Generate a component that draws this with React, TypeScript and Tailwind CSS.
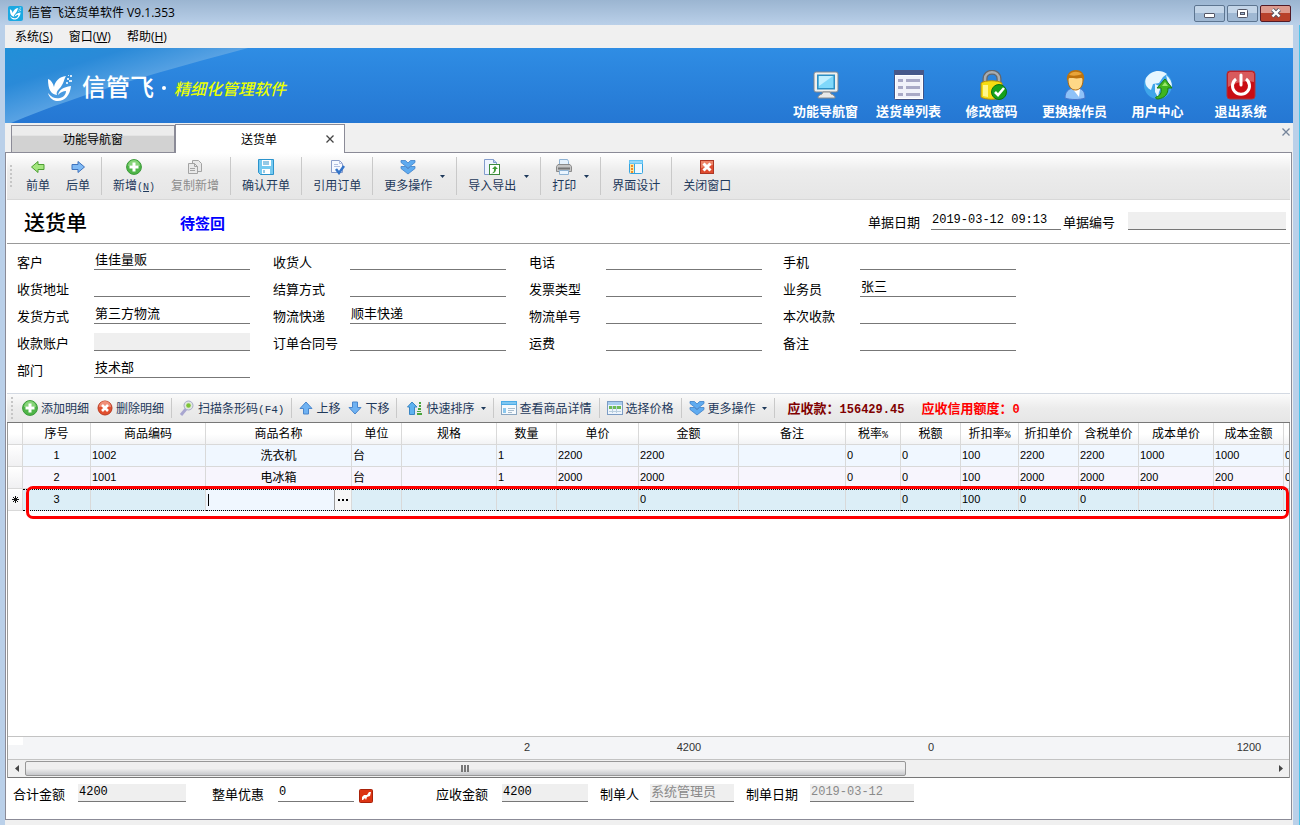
import React, { useId } from "react"
import clsx from "clsx"

const mono = "font-['Liberation_Mono','Noto_Sans_CJK_SC',monospace]"
const num = "font-['Liberation_Sans','Noto_Sans_CJK_SC',sans-serif] text-[11px]"
const menuFont = "font-['Open_Sans','Noto_Sans_CJK_SC',sans-serif]"

/* ---------- icons ---------- */

function Bird({ className }: { className?: string }) {
    return (
        <svg viewBox="0 0 26 28" className={className} fill="#fff">
            <path d="M1 5C4 6 6 9 7 13C8 7 12 3 19 2C17 5 17 10 12 15C10 17 9 19 10 21C4 20 1 16 1 5z" />
            <path d="M24 12C23 22 17 28 9 27C5 26 2 23 1 19C5 24 9 25 13 24C17 23 19 20 19 17C16 17 14 18 11 21C12 16 16 13 24 12z" />
            <path d="M20 4h2v2h-2zM23 1h2v2h-2zM22 6h3v2h-3zM19 8h2v2h-2zM21 1h1v1h-1z" opacity=".8" />
        </svg>
    )
}

const MonitorIcon = () => (
    <svg viewBox="0 0 30 30" className="size-[30px]">
        <rect x="3" y="2" width="24" height="20" rx="2" fill="#f0f0ee" stroke="#7f8790" />
        <rect x="6" y="4.500" width="18" height="15" fill="#2d8fc4" />
        <rect x="7.500" y="6" width="15" height="12" fill="#7fd8fb" />
        <path d="M8 6h14L8 16z" fill="#c1efff" />
        <path d="M12 22h7l1 2c3 1 4 2 4 4H7c0-2 1-3 4-4z" fill="#e9e9e9" stroke="#8a8a8a" />
    </svg>
)

const ListIcon = () => (
    <svg viewBox="0 0 30 30" className="size-[30px]">
        <rect x="0.5" y="0.5" width="29" height="29" rx="1" fill="#fff" stroke="#3f5185" />
        <path d="M0 0h30v5H0z" fill="#46588a" />
        <path d="M2 6h26v22H2z" fill="#f1f2fa" />
        <path d="M4 9h5v3H4zM12 9h14v3H12zM4 16h5v3H4zM12 16h14v3H12zM4 23h5v3H4zM12 23h14v3H12z" fill="#a9a9c6" />
    </svg>
)

const LockIcon = () => (
    <svg viewBox="0 0 30 30" className="size-[30px]">
        <path d="M8 14V9c0-9 14-9 14 0v5" fill="none" stroke="#63676c" strokeWidth="5" />
        <path d="M8 14V9c0-9 14-9 14 0v5" fill="none" stroke="#a9adb1" strokeWidth="2.500" />
        <path d="M4 13c4-3 17-3 21 0v14c-4 3-17 3-21 0z" fill="#f5dc12" stroke="#b78d09" />
        <path d="M6 15h5v12l-5-1z" fill="#fff78a" />
        <circle cx="22" cy="22" r="7.5" fill="#16a11c" stroke="#0a7210" />
        <path d="M18 22l3 3 6-7" fill="none" stroke="#fff" strokeWidth="2.6" />
    </svg>
)

const UserIcon = () => (
    <svg viewBox="0 0 30 30" className="size-[30px]">
        <path d="M5 28c0-6 3-9 8-10h5c5 1 7 4 7 10-5 2-15 2-20 0z" fill="#8fc2f8" stroke="#4776cc" />
        <path d="M12 18l7 9 1-8z" fill="#fff" />
        <path d="M8 10c0-6 3-8 7.500-8S23 4 23 10s-3 10-7.500 10S8 16 8 10z" fill="#ffd887" stroke="#b0690c" />
        <path d="M7 11C6 4 10 0 16 0s9 4 8 11c-1-2-1-3-3-3-5 1-8 0-11 0-2 0-2 2-3 3z" fill="#bd730e" />
        <path d="M9 5c3-4 9-4 13-1-5 2-9 2-13 1z" fill="#e8a53a" />
    </svg>
)

const GlobeIcon = () => (
    <svg viewBox="0 0 30 30" className="size-[30px]">
        <circle cx="15" cy="15" r="14" fill="#3fa5ea" />
        <path d="M3 8C8 0 18-1 24 4l-4 3-4 6-6 1-2 6C3 18 1 13 3 8z" fill="#e6f6ff" />
        <path d="M12 14l6 3-2 5-1 5-3-5zM23 5c4 3 6 7 6 12l-4-4z" fill="#e6f6ff" />
        <path d="M22 9l7 9h-4c0 6-3 10-10 11-2 0-3-1-2-2 4-1 6-4 5-9h-4z" fill="#3fb51f" stroke="#1f7d10" />
        <path d="M22 12l3 4h-6z" fill="#9be66b" />
    </svg>
)

const PowerIcon = () => (
    <svg viewBox="0 0 30 30" className="size-[30px]">
        <rect x="1" y="1" width="28" height="28" rx="3" fill="#c90d14" stroke="#a9393e" />
        <path d="M2 4c0-1 1-2 2-2h22c1 0 2 1 2 2v8C20 10 10 12 2 17z" fill="#d85a5c" />
        <path d="M10 9a8.5 8.5 0 1 0 10 0" fill="none" stroke="#fff" strokeWidth="3" />
        <path d="M15 5v10" stroke="#fff" strokeWidth="3" strokeLinecap="round" />
    </svg>
)

const LeftArrow = () => (
    <svg viewBox="0 0 16 16" className="size-4">
        <path d="M1.500 8L8 2.500V5.500h6v5H8v3z" fill="#a4e67e" stroke="#4d9f33" />
    </svg>
)

const RightArrow = () => (
    <svg viewBox="0 0 16 16" className="size-4">
        <path d="M14.500 8L8 2.500V5.500H2v5h6v3z" fill="#7fb9f4" stroke="#3f73bd" />
    </svg>
)

const AddIcon = () => (
    <svg viewBox="0 0 16 16" className="size-4">
        <circle cx="8" cy="8" r="7.400" fill="#4fb548" stroke="#3a9a38" />
        <path d="M2 7a6 6 0 0 1 12 0c-4-1-8-1-12 0z" fill="#86d478" />
        <path d="M6.500 3.500h3v3h3v3h-3v3h-3v-3h-3v-3h3z" fill="#fff" />
    </svg>
)

const DeleteIcon = () => (
    <svg viewBox="0 0 16 16" className="size-4">
        <circle cx="8" cy="8" r="7" fill="#e2502f" stroke="#b9391f" />
        <path d="M2 7a6 6 0 0 1 12 0c-4-1-8-1-12 0z" fill="#f0907a" />
        <path d="M5 5l6 6M11 5l-6 6" stroke="#fff" strokeWidth="2.600" />
    </svg>
)

const CopyIcon = () => (
    <svg viewBox="0 0 16 16" className="size-4" fill="#e9e9e9" stroke="#a3a3a3">
        <path d="M5.500 1.500h6l3 3v8h-9z" />
        <path d="M1.500 4.500h6l3 3v7h-9zM7.500 4.500v3h3" />
        <path d="M3 9.500h5M3 11.500h5" />
    </svg>
)

const SaveIcon = () => (
    <svg viewBox="0 0 16 16" className="size-4">
        <path d="M.5.5h15v15h-13l-2-2z" fill="#74c9f0" stroke="#2b93cc" />
        <path d="M4 1h9v6H4zM4 10h8v5H4z" fill="#fff" />
        <path d="M5 3h6M5 5h6M6 11v3" stroke="#2b93cc" />
    </svg>
)

const OrderIcon = () => (
    <svg viewBox="0 0 16 16" className="size-4">
        <path d="M2.500 1.500h8l3 3v9h-11z" fill="#f6f8ff" stroke="#8b9cc8" />
        <path d="M10.500 1.500v3h3M5 5.500h4M5 7.500h6" fill="none" stroke="#b3bfe0" />
        <path d="M7 10l3 4 5-7" fill="none" stroke="#3474c8" strokeWidth="2.500" />
    </svg>
)

const MoreIcon = () => (
    <svg viewBox="0 0 16 16" className="size-4" fill="#5fabf0" stroke="#3f80c8" strokeWidth=".8">
        <path d="M1 1.500h4.500L8 4l2.500-2.500H15v2L8 9 1 3.500z" />
        <path d="M1 7.500h4.500L8 10l2.500-2.500H15v2L8 15 1 9.500z" />
    </svg>
)

const ExportIcon = () => (
    <svg viewBox="0 0 16 16" className="size-4">
        <path d="M.5.500h9l3 3v12H.5z" fill="#eef4ff" stroke="#829ccc" />
        <path d="M9.500.500v3h3" fill="#b8d0f4" stroke="#829ccc" />
        <rect x="5.500" y="5.500" width="10" height="10" fill="#fff" stroke="#3d8a3d" />
        <path d="M7 14c3 0 3-2 3-4H8l3-3 3 3h-2c0 3-2 5-5 4z" fill="#3d9a33" />
    </svg>
)

const PrintIcon = () => (
    <svg viewBox="0 0 16 16" className="size-4">
        <path d="M3.500.500h8l1 2v4h-9z" fill="#e6f2fd" stroke="#8fb3d4" />
        <path d="M2 5.500h12l1.500 2v5H.5v-5z" fill="#c4c4c4" stroke="#8b8b8b" />
        <path d="M2 9.500h12" stroke="#757575" strokeWidth="2" />
        <path d="M3.500 11.500h9v4h-9z" fill="#eaf5ff" stroke="#8fb3d4" />
    </svg>
)

const DesignIcon = () => (
    <svg viewBox="0 0 16 16" className="size-4">
        <rect x="1.500" y="1.500" width="13" height="13" rx="1" fill="#eef9ff" stroke="#33a4e0" />
        <path d="M1 1h14v4H1z" fill="#63c4f4" />
        <path d="M2 3h12" stroke="#c8edff" />
        <path d="M2 5h4v9H2z" fill="#ffe7a0" />
        <path d="M3 6h2v2H3zM3 9h2v2H3zM3 12h2v2H3z" fill="#f08a2c" />
        <path d="M6.500 5v9" stroke="#33a4e0" />
    </svg>
)

const CloseRedIcon = () => (
    <svg viewBox="0 0 16 16" className="size-4">
        <rect x="1.500" y="1.500" width="13" height="13" fill="#df4c2f" stroke="#ad3624" />
        <path d="M2 2h12v4L2 9z" fill="#ee8468" />
        <path d="M4.500 4.500l7 7M11.500 4.500l-7 7" stroke="#fff" strokeWidth="3" />
    </svg>
)

const ScanIcon = () => (
    <svg viewBox="0 0 16 16" className="size-4">
        <path d="M7 9l-5 6" stroke="#a8a6d0" strokeWidth="3" />
        <circle cx="9.500" cy="5.500" r="4.500" fill="#e1e9dc" stroke="#a5a8cc" />
        <circle cx="9.500" cy="5.500" r="2.300" fill="#7cc438" />
    </svg>
)

const UpIcon = () => (
    <svg viewBox="0 0 14 16" className="h-4 w-[14px]">
        <path d="M7 2l6 6.500H9.500V14h-5V8.500H1z" fill="#6fb2f2" stroke="#4a86cc" />
    </svg>
)

const DownIcon = () => (
    <svg viewBox="0 0 14 16" className="h-4 w-[14px]">
        <path d="M7 14l6-6.500H9.500V2h-5v5.500H1z" fill="#6fb2f2" stroke="#4a86cc" />
    </svg>
)

const SortIcon = () => (
    <svg viewBox="0 0 16 16" className="size-4">
        <path d="M5 2l5 5H7.500v7.500h-5V7H.5z" fill="#5fb2f0" stroke="#3a86c4" />
        <path d="M12 2h2v2h-2zM12 5h2v2h-2zM11 8h3v2h-3zM10 11h4v1h-4zM10 13h5v2h-5z" fill="#4aa63c" />
    </svg>
)

const DetailIcon = () => (
    <svg viewBox="0 0 16 16" className="size-4">
        <rect x=".5" y="1.500" width="15" height="13" fill="#f6fafd" stroke="#8ba6c0" />
        <path d="M0 1h16v4H0z" fill="#4cabe6" />
        <path d="M1 3h14" stroke="#b2e2fb" />
        <path d="M2 8h3v5H2z" fill="#8cc8ee" />
        <path d="M7 8.500h7M7 10.500h6M7 12.500h4" stroke="#a8bccd" />
    </svg>
)

const PriceIcon = () => (
    <svg viewBox="0 0 16 16" className="size-4">
        <rect x=".5" y="1.500" width="15" height="13" fill="#eef5fc" stroke="#7c9cc4" />
        <path d="M1 2h14v3H1z" fill="#a9cdef" />
        <path d="M2 6h12v3H2z" fill="#6cbb57" />
        <path d="M2 11.500h12M5.500 6v7M9.500 6v7" stroke="#b9cede" />
    </svg>
)

const Caret = () => (
    <svg viewBox="0 0 5 3" className="h-[3px] w-[5px]">
        <path d="M0 0h5L2.500 3z" fill="#1e395b" />
    </svg>
)

const NewRowMark = () => (
    <svg viewBox="0 0 9 9" className="mx-auto size-[9px]">
        <path d="M4.500 1v7M1 4.500h7M2 2l5 5M7 2L2 7" stroke="#111" />
    </svg>
)

const Cross = ({ className }: { className?: string }) => (
    <svg viewBox="0 0 8 8" className={clsx("size-2", className)}>
        <path d="M.5.5l7 7M7.500.5l-7 7" stroke="currentColor" strokeWidth="1.300" />
    </svg>
)

/* ---------- small parts ---------- */

function Grip() {
    return (
        <div className="flex w-[3px] flex-col gap-[2px]">
            {[0, 1, 2, 3, 4, 5].map((i) => (
                <span key={i} className="h-[2px] w-[2px] bg-[#c6c6c6]" />
            ))}
        </div>
    )
}

type ToolProps = { icon: React.ReactNode; children: React.ReactNode; disabled?: boolean; more?: boolean }

function Tool({ icon, children, disabled, more }: ToolProps) {
    return (
        <button disabled={disabled} className={clsx("flex items-center gap-2 px-2", disabled ? "text-[#8d8d8d]" : "text-[#1e395b]")}>
            <span className="flex flex-col items-center gap-[2px]">
                {icon}
                <span className="h-4 whitespace-nowrap leading-4">{children}</span>
            </span>
            {more && <Caret />}
        </button>
    )
}

function ToolGroup({ children, last }: { children: React.ReactNode; last?: boolean }) {
    return <div className={clsx("flex h-[38px] items-center px-[3px]", !last && "border-r border-[#c9c9c9]")}>{children}</div>
}

function SmallTool({ icon, children, more }: ToolProps) {
    return (
        <button className="flex items-center gap-[3px] px-1 whitespace-nowrap text-[#1e395b]">
            {icon}
            <span className="h-4 leading-4">{children}</span>
            {more && <span className="pl-[3px]"><Caret /></span>}
        </button>
    )
}

function SmallGroup({ children }: { children: React.ReactNode }) {
    return <div className="flex h-[20px] items-center border-r border-[#c9c9c9] px-[3px]">{children}</div>
}

type FieldProps = { label: string; value?: string; labelWidth?: string; width?: string; gray?: boolean; muted?: boolean; code?: boolean }

function Field({ label, value = "", labelWidth = "w-[77px]", width = "w-[156px]", gray, muted, code }: FieldProps) {
    const id = useId()
    return (
        <div className="flex h-[18px]">
            <label htmlFor={id} className={clsx("shrink-0 pt-px leading-[18px] whitespace-nowrap", labelWidth)}>{label}</label>
            <input
                id={id}
                defaultValue={value}
                readOnly={gray}
                className={clsx(
                    "h-[18px] border-b border-[#777] pr-[2px] pl-px leading-4 outline-none",
                    width,
                    gray ? "bg-[#efefef]" : "bg-white",
                    muted && "text-[#8a8a8a]",
                    code && mono,
                    code ? "pb-[2px] text-[12px]" : "pb-[4px] text-[13px]"
                )}
            />
        </div>
    )
}

/* ---------- data ---------- */

const navItems = [
    { text: "功能导航窗", icon: <MonitorIcon /> },
    { text: "送货单列表", icon: <ListIcon /> },
    { text: "修改密码", icon: <LockIcon /> },
    { text: "更换操作员", icon: <UserIcon /> },
    { text: "用户中心", icon: <GlobeIcon /> },
    { text: "退出系统", icon: <PowerIcon /> },
]

const fields: FieldProps[] = [
    { label: "客户", value: "佳佳量贩" }, { label: "收货人" }, { label: "电话" }, { label: "手机" },
    { label: "收货地址" }, { label: "结算方式" }, { label: "发票类型" }, { label: "业务员", value: "张三" },
    { label: "发货方式", value: "第三方物流" }, { label: "物流快递", value: "顺丰快递" }, { label: "物流单号" }, { label: "本次收款" },
    { label: "收款账户", gray: true }, { label: "订单合同号" }, { label: "运费" }, { label: "备注" },
    { label: "部门", value: "技术部" },
]

const columns = [
    { name: "序号", col: "w-[68px]", sum: "" },
    { name: "商品编码", col: "w-[115px]", sum: "" },
    { name: "商品名称", col: "w-[146px]", sum: "" },
    { name: "单位", col: "w-[50px]", sum: "" },
    { name: "规格", col: "w-[95px]", sum: "" },
    { name: "数量", col: "w-[60px]", sum: "2" },
    { name: "单价", col: "w-[82px]", sum: "" },
    { name: "金额", col: "w-[100px]", sum: "4200" },
    { name: "备注", col: "w-[107px]", sum: "" },
    { name: "税率%", col: "w-[55px]", sum: "" },
    { name: "税额", col: "w-[60px]", sum: "0" },
    { name: "折扣率%", col: "w-[58px]", sum: "" },
    { name: "折扣单价", col: "w-[60px]", sum: "" },
    { name: "含税单价", col: "w-[60px]", sum: "" },
    { name: "成本单价", col: "w-[75px]", sum: "" },
    { name: "成本金额", col: "w-[70px]", sum: "1200" },
    { name: "", col: "w-[60px]", sum: "" },
]

const rows = [
    ["1", "1002", "洗衣机", "台", "", "1", "2200", "2200", "", "0", "0", "100", "2200", "2200", "1000", "1000", "0"],
    ["2", "1001", "电冰箱", "台", "", "1", "2000", "2000", "", "0", "0", "100", "2000", "2000", "200", "200", "0"],
    ["3", "", "", "", "", "", "", "0", "", "", "0", "100", "0", "0", "", "", ""],
]

const rowColors = ["bg-[#f0f7ff]", "bg-[#f7f5fd]", "bg-[#dceef7]"]

/* ---------- sections ---------- */

function TitleBar() {
    const button = "flex h-[17px] w-[31px] items-center justify-center rounded-[2px] border"
    return (
        <div className="flex h-[25px] items-center bg-linear-to-b from-[#9bb5d1] to-[#bad0e9] pt-px pr-[9px] pl-2">
            <span className="flex size-[15px] items-center justify-center rounded-[2px] bg-[#1ba9e2]">
                <Bird className="h-[13px] w-[13px]" />
            </span>
            <h1 className={clsx("ml-[5px] pb-px text-[12px]", menuFont)}>信管飞送货单软件 V9.1.353</h1>
            <div className="ml-auto flex gap-[2px]">
                <button aria-label="最小化" className={clsx(button, "border-[#5d7590] bg-linear-to-b from-[#c3d5e8] from-50% to-[#9fb8d3] to-50%")}>
                    <span className="mt-1 h-[5px] w-[11px] rounded-[1px] border border-[#535666] bg-white" />
                </button>
                <button aria-label="最大化" className={clsx(button, "border-[#5d7590] bg-linear-to-b from-[#c3d5e8] from-50% to-[#9fb8d3] to-50%")}>
                    <svg viewBox="0 0 11 9" className="h-[9px] w-[11px]">
                        <rect x=".5" y=".5" width="10" height="8" rx="1" fill="#fff" stroke="#535666" />
                        <rect x="3.500" y="3.500" width="4" height="2" fill="#9fb8d3" stroke="#535666" />
                    </svg>
                </button>
                <button aria-label="关闭" className={clsx(button, "border-[#531a26] bg-linear-to-b from-[#dd9a8e] from-50% to-[#b8412b] to-50%")}>
                    <svg viewBox="0 0 12 10" className="h-[10px] w-[12px]">
                        <path d="M2.500 1.500l7 7M9.500 1.500l-7 7" stroke="#535666" strokeWidth="4" />
                        <path d="M2.500 1.500l7 7M9.500 1.500l-7 7" stroke="#fff" strokeWidth="2.400" />
                    </svg>
                </button>
            </div>
        </div>
    )
}

function Banner() {
    return (
        <header className="relative flex h-[75px] bg-linear-to-b from-[#2f8de4] to-[#2577d3]">
            <svg viewBox="0 0 260 75" className="absolute top-0 left-0 h-[75px] w-[260px]">
                <defs>
                    <linearGradient id="shine" gradientUnits="userSpaceOnUse" x1="0" y1="0" x2="22" y2="70">
                        <stop offset="0" stopColor="#2190d8" />
                        <stop offset=".5" stopColor="#2a8ad8" />
                        <stop offset="1" stopColor="#5aa3e4" />
                    </linearGradient>
                </defs>
                <path d="M0 0h243C165 21 80 44 6 75H0z" fill="url(#shine)" />
            </svg>
            <div className="relative flex h-[75px] items-center pt-1 pl-[42px]">
                <Bird className="h-[28px] w-[26px]" />
                <span className="ml-[9px] pb-[3px] text-[24px] font-medium text-white">信管飞</span>
                <span className="mx-[8px] size-1 rounded-full bg-white" />
                <span className="text-[16px] font-medium text-[#eaff00] italic">精细化管理软件</span>
            </div>
            <nav className="relative ml-auto flex pt-[22px] pr-[11px]">
                {navItems.map((item) => (
                    <button key={item.text} className="flex w-[83px] flex-col items-center gap-[2px] text-[13px] leading-[18px] font-bold text-white">
                        {item.icon}
                        <span>{item.text}</span>
                    </button>
                ))}
            </nav>
        </header>
    )
}

function Toolbar() {
    return (
        <div className="flex h-[47px] items-center border-b border-[#d8d8d8] bg-linear-to-b from-white via-[#ececec] via-40% to-[#e6e6e6] pl-[3px]">
            <Grip />
            <div className="flex pl-[2px]">
                <ToolGroup>
                    <Tool icon={<LeftArrow />}>前单</Tool>
                    <Tool icon={<RightArrow />}>后单</Tool>
                </ToolGroup>
                <ToolGroup>
                    <Tool icon={<AddIcon />}>新增<span className={clsx(mono, "text-[10px] leading-none")}>(<u>N</u>)</span></Tool>
                    <Tool icon={<CopyIcon />} disabled>复制新增</Tool>
                </ToolGroup>
                <ToolGroup><Tool icon={<SaveIcon />}>确认开单</Tool></ToolGroup>
                <ToolGroup><Tool icon={<OrderIcon />}>引用订单</Tool></ToolGroup>
                <ToolGroup><Tool icon={<MoreIcon />} more>更多操作</Tool></ToolGroup>
                <ToolGroup><Tool icon={<ExportIcon />} more>导入导出</Tool></ToolGroup>
                <ToolGroup><Tool icon={<PrintIcon />} more>打印</Tool></ToolGroup>
                <ToolGroup><Tool icon={<DesignIcon />}>界面设计</Tool></ToolGroup>
                <ToolGroup last><Tool icon={<CloseRedIcon />}>关闭窗口</Tool></ToolGroup>
            </div>
        </div>
    )
}

function DetailToolbar() {
    return (
        <div className="flex h-[30px] items-center border-t border-b border-t-[#d3d9e2] border-b-[#777] bg-linear-to-b from-[#fbfbfb] via-[#ececec] via-50% to-[#e6e6e6] pl-1">
            <Grip />
            <div className="flex pl-px">
                <SmallGroup>
                    <SmallTool icon={<AddIcon />}>添加明细</SmallTool>
                    <SmallTool icon={<DeleteIcon />}>删除明细</SmallTool>
                </SmallGroup>
                <SmallGroup>
                    <SmallTool icon={<ScanIcon />}>扫描条形码<span className={clsx(mono, "text-[11px] leading-none")}>(F4)</span></SmallTool>
                </SmallGroup>
                <SmallGroup>
                    <SmallTool icon={<UpIcon />}>上移</SmallTool>
                    <SmallTool icon={<DownIcon />}>下移</SmallTool>
                </SmallGroup>
                <div className="w-[3px]" />
                <SmallGroup><SmallTool icon={<SortIcon />} more>快速排序</SmallTool></SmallGroup>
                <SmallGroup><SmallTool icon={<DetailIcon />}>查看商品详情</SmallTool></SmallGroup>
                <SmallGroup><SmallTool icon={<PriceIcon />}>选择价格</SmallTool></SmallGroup>
                <SmallGroup><SmallTool icon={<MoreIcon />} more>更多操作</SmallTool></SmallGroup>
            </div>
            <p className="ml-[13px] h-4 text-[13px] leading-4 font-bold whitespace-nowrap text-[#800000]">
                应收款：<span className={clsx(mono, "text-[12px] leading-none")}>156429.45</span>
            </p>
            <p className="ml-[17px] h-4 text-[13px] leading-4 font-bold whitespace-nowrap text-[#f00]">
                应收信用额度：<span className={clsx(mono, "text-[12px] leading-none")}>0</span>
            </p>
        </div>
    )
}

function Grid() {
    const line = "h-[22px] border-r border-b border-[#d9d9d9] font-normal overflow-hidden whitespace-nowrap"
    return (
        <div className="relative min-h-0 flex-1">
            <div className="overflow-hidden">
                <table className="w-[1336px] table-fixed border-separate border-spacing-0 text-[12px] leading-4">
                    <colgroup>
                        <col className="w-[15px]" />
                        {columns.map((c, i) => <col key={i} className={c.col} />)}
                    </colgroup>
                    <thead>
                        <tr className="bg-linear-to-b from-white from-50% to-[#f1f2f4]">
                            <th className={line} />
                            {columns.map((c, i) => (
                                <th key={i} className={clsx(line, "pb-px")}>
                                    {c.name.replace("%", "")}
                                    {c.name.endsWith("%") && <span className={clsx(mono, "text-[10px] leading-none")}>%</span>}
                                </th>
                            ))}
                        </tr>
                    </thead>
                    <tbody>
                        {rows.map((row, r) => (
                            <tr key={r} className={rowColors[r]}>
                                <td className={clsx(line, "bg-linear-to-b from-white to-[#f0f0f2]")}>{r === 2 && <NewRowMark />}</td>
                                {row.map((cell, i) => {
                                    const editing = r === 2 && i === 2
                                    return (
                                        <td
                                            key={i}
                                            className={clsx(
                                                line,
                                                !editing && "pb-[2px]",
                                                i === 0 || i === 2 ? "text-center" : "pl-px",
                                                i !== 2 && i !== 3 && num,
                                                r === 2 && "border-y border-y-black [border-block-style:dotted]"
                                            )}
                                        >
                                            {editing ? (
                                                <div className="flex h-5 items-center bg-[#f0f7ff] pl-[2px]">
                                                    <span className="h-3 w-px bg-black" />
                                                    <input aria-label="商品名称" className="h-4 min-w-0 flex-1 outline-none" />
                                                    <button aria-label="选择商品" className="flex h-5 w-[17px] items-center justify-center gap-[2px] border-l border-[#999] bg-[#f7f7f7]">
                                                        <span className="size-[2px] bg-black" />
                                                        <span className="size-[2px] bg-black" />
                                                        <span className="size-[2px] bg-black" />
                                                    </button>
                                                </div>
                                            ) : cell}
                                        </td>
                                    )
                                })}
                            </tr>
                        ))}
                    </tbody>
                </table>
            </div>
            {/* highlight round the new row */}
            <div className="pointer-events-none absolute top-[63px] right-0 left-[18px] h-[33px] rounded-[7px] border-3 border-[#f00]" />
        </div>
    )
}

function Summary() {
    return (
        <>
            <div className="overflow-hidden border-y border-[#c3c3c3] bg-[#f4f5f7]">
                <div className="flex h-[22px] items-center pb-px text-[#333]">
                    <span className="h-full w-[15px] shrink-0 bg-linear-to-b from-white from-40% to-[#f4f5f7] to-40%" />
                    {columns.map((c, i) => (
                        <span key={i} className={clsx("shrink-0 text-center", c.col, num)}>{c.sum}</span>
                    ))}
                </div>
            </div>
            <div className="flex h-[18px] items-center border-b border-[#777] bg-[#f0f0f0]">
                <button aria-label="向左滚动" className="flex h-4 w-[17px] items-center justify-center">
                    <svg viewBox="0 0 4 7" className="h-[7px] w-1"><path d="M4 0v7L0 3.500z" fill="#444" /></svg>
                </button>
                <div className="flex flex-1">
                    <div className="flex h-[15px] flex-[12] items-center justify-center gap-px rounded-[2px] border border-[#979797] bg-linear-to-b from-[#efefef] from-50% to-[#c6c7cb] to-100%">
                        <span className="h-[7px] w-[2px] bg-[#777]" />
                        <span className="h-[7px] w-[2px] bg-[#777]" />
                        <span className="h-[7px] w-[2px] bg-[#777]" />
                    </div>
                    <div className="flex-[5]" />
                </div>
                <button aria-label="向右滚动" className="flex h-4 w-[17px] items-center justify-center">
                    <svg viewBox="0 0 4 7" className="h-[7px] w-1"><path d="M0 0v7l4-3.500z" fill="#444" /></svg>
                </button>
            </div>
        </>
    )
}

function Footer() {
    return (
        <div className="flex h-[41px] pt-[6px] pl-[6px] text-[13px]">
            <Field label="合计金额" value="4200" labelWidth="w-[65px]" width="w-[108px]" gray code />
            <div className="ml-[26px] flex">
                <Field label="整单优惠" value="0" labelWidth="w-[66px]" width="w-[76px]" code />
                <button aria-label="修改优惠" className="mt-[5px] ml-[5px] size-[14px]">
                    <svg viewBox="0 0 14 14" className="size-[14px]">
                        <rect x=".5" y=".5" width="13" height="13" rx="1" fill="#dc3413" stroke="#a8220a" />
                        <path d="M3 11V8l2-2h3l2-3h2L11 7 8 8l-1 3-1-2-2 2z" fill="#fff" />
                    </svg>
                </button>
            </div>
            <div className="ml-[63px] flex gap-3">
                <Field label="应收金额" value="4200" labelWidth="w-[66px]" width="w-[86px]" gray code />
                <Field label="制单人" value="系统管理员" labelWidth="w-[50px]" width="w-[84px]" gray muted />
                <Field label="制单日期" value="2019-03-12" labelWidth="w-[64px]" width="w-[104px]" gray muted code />
            </div>
        </div>
    )
}

const App = () => {
    return (
        <div className="flex min-h-screen flex-col bg-[#bad0e9] font-['Noto_Sans_CJK_SC',sans-serif] text-[12px] text-black">
            <TitleBar />
            <div className="flex flex-1 border-r border-[#4cc3e8]">
                <div className="mr-[6px] ml-[5px] flex min-w-0 flex-1 flex-col bg-[#f0f0f0]">
                    <div className={clsx("flex h-[23px] items-center gap-4 pl-[10px]", menuFont)}>
                        <button>系统(<u>S</u>)</button>
                        <button>窗口(<u>W</u>)</button>
                        <button>帮助(<u>H</u>)</button>
                    </div>
                    <Banner />
                    <div className="flex h-[29px] items-end pl-[6px]">
                        <button className="h-[27px] w-[164px] border border-b-0 border-[#8b8b97] bg-linear-to-b from-[#ececec] from-35% to-[#d2d2d2] to-40%">功能导航窗</button>
                        <div className="relative z-10 -mb-px flex h-[29px] w-[170px] items-center border border-b-0 border-[#8b8b97] bg-white pr-[10px] pl-4">
                            <button className="flex-1 text-center">送货单</button>
                            <button aria-label="关闭标签"><Cross className="text-[#444]" /></button>
                        </div>
                        <button aria-label="关闭全部" className="mr-[3px] mb-4 ml-auto"><Cross className="text-[#75849a]" /></button>
                    </div>
                    <main className="mr-px mb-[5px] flex flex-1 flex-col border border-[#8b8b97] bg-white">
                        <div className="flex flex-1 flex-col px-px">
                            <Toolbar />
                            <div className="flex h-[44px] border-b border-[#999] pr-1 pl-[17px]">
                                <h2 className="pt-[7px] text-[21px] leading-[28px] font-medium">送货单</h2>
                                <strong className="ml-[93px] pt-[13px] text-[15px] leading-[20px] text-[#00f]">待签回</strong>
                                <div className="ml-auto flex gap-[2px] pt-[12px] text-[13px]">
                                    <Field label="单据日期" value="2019-03-12 09:13" labelWidth="w-[63px]" width="w-[130px]" code />
                                    <Field label="单据编号" labelWidth="w-[65px]" width="w-[158px]" gray />
                                </div>
                            </div>
                            <div className="grid grid-cols-[256px_256px_254px_233px] gap-y-[9px] pt-2 pb-[15px] pl-[10px] text-[13px]">
                                {fields.map((f) => <Field key={f.label} {...f} />)}
                            </div>
                            <DetailToolbar />
                            <div className="flex flex-1 flex-col border-x border-[#999]">
                                <Grid />
                                <Summary />
                            </div>
                            <Footer />
                        </div>
                    </main>
                </div>
            </div>
        </div>
    )
}

export default App
